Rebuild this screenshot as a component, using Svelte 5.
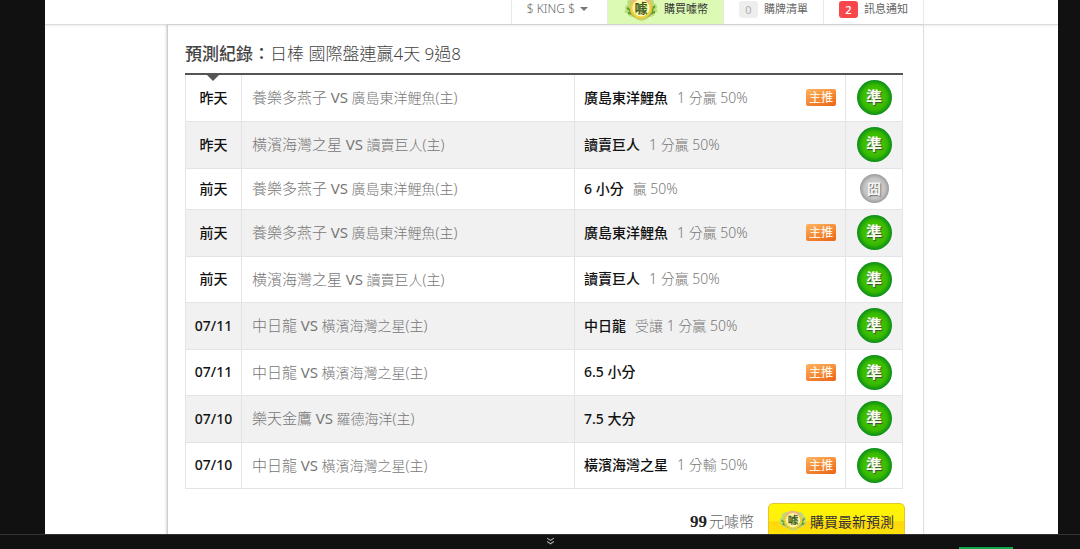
<script>
  let name = "$ KING $";
  let cartCount = 0;
  let noticeCount = 2;
  let price = 99;

  const records = [
    { day: "昨天", away: "養樂多燕子", home: "廣島東洋鯉魚", pick: "廣島東洋鯉魚", note: "1 分贏 50%", main: true, hit: true },
    { day: "昨天", away: "橫濱海灣之星", home: "讀賣巨人", pick: "讀賣巨人", note: "1 分贏 50%", main: false, hit: true },
    { day: "前天", away: "養樂多燕子", home: "廣島東洋鯉魚", pick: "6 小分", note: "贏 50%", main: false, hit: false },
    { day: "前天", away: "養樂多燕子", home: "廣島東洋鯉魚", pick: "廣島東洋鯉魚", note: "1 分贏 50%", main: true, hit: true },
    { day: "前天", away: "橫濱海灣之星", home: "讀賣巨人", pick: "讀賣巨人", note: "1 分贏 50%", main: false, hit: true },
    { day: "07/11", away: "中日龍", home: "橫濱海灣之星", pick: "中日龍", note: "受讓 1 分贏 50%", main: false, hit: true },
    { day: "07/11", away: "中日龍", home: "橫濱海灣之星", pick: "6.5 小分", note: "", main: true, hit: true },
    { day: "07/10", away: "樂天金鷹", home: "羅德海洋", pick: "7.5 大分", note: "", main: false, hit: true },
    { day: "07/10", away: "中日龍", home: "橫濱海灣之星", pick: "橫濱海灣之星", note: "1 分輸 50%", main: true, hit: true },
  ];
</script>

{#snippet coin()}
  <svg class="coin" viewBox="0 0 34 28" aria-hidden="true">
    <path d="M9 3C4 4 2 7 4 9C1 11 0 13 2 15C0 16 0 18 3 18C4 21 7 22 10 22C14 27 21 27 25 22C29 22 31 20 31 18C34 17 34 15 32 14C34 12 33 9 30 8C30 5 28 3 25 3Z" fill="#b9dc7c" />
    <path d="M3 13Q6 14 7 18M4 18Q9 18 11 22M31 11Q28 13 28 17M31 17Q26 18 23 22" fill="none" stroke="#5f9c2c" stroke-width="2" />
    <circle cx="17" cy="13" r="11" fill="#ecd23f" stroke="#d9c34a" />
    <circle cx="17" cy="13" r="8" fill="#f7f3a0" stroke="#fffbd0" />
    <path d="M8 7Q16 -1 26 7" fill="none" stroke="#f0b489" stroke-width="2" />
    <text x="17" y="18" text-anchor="middle" font-size="13" font-weight="700" fill="#3f5d1d">噱</text>
  </svg>
{/snippet}

<div class="shell">
  <header>
    <nav class="column">
      <button class="item user">{name}<span class="caret"></span></button>
      <a class="item buy" href="#buy">{@render coin()}購買噱幣</a>
      <a class="item" href="#cart"><span class="badge">{cartCount}</span>購牌清單</a>
      <a class="item" href="#notice"><span class="badge red">{noticeCount}</span>訊息通知</a>
    </nav>
  </header>

  <main class="column">
    <h1><b>預測紀錄：</b>日棒 國際盤連贏4天 9過8</h1>

    <div class="records">
      <table>
        <tbody>
          {#each records as r}
            <tr class:push={!r.hit}>
              <th scope="row">{r.day}</th>
              <td class="game"><span class="away">{r.away}</span> <span class="vs">VS</span> {r.home}(主)</td>
              <td class="pick">
                <div class="pick-row">
                  <b>{r.pick}</b><span>{r.note}</span>
                  {#if r.main}<em>主推</em>{/if}
                </div>
              </td>
              <td class="result">
                {#if r.hit}
                  <span class="mark">準</span>
                {:else}
                  <span class="mark gray">囧</span>
                {/if}
              </td>
            </tr>
          {/each}
        </tbody>
      </table>
    </div>

    <div class="order">
      <p><strong>{price}</strong>元噱幣</p>
      <button class="order-button">{@render coin()}購買最新預測</button>
    </div>
  </main>
</div>

<footer>
  <button class="expand" aria-label="展開">
    <svg viewBox="0 0 8 8"><path d="M1 1L4 3L7 1M1 4L4 6L7 4" fill="none" stroke="#aaa" /></svg>
  </button>
  <span class="tab"></span>
</footer>

<style>
:global(body) {
  background: #111;
  font-family: "Open Sans", "Noto Sans CJK TC", sans-serif;
}

.shell {
  height: 100vh;
  margin: 0 22px 0 45px;
  background: #fff;
  overflow: hidden;
  display: flex;
  flex-direction: column;
}

.column {
  width: 75%;
  max-width: 757px;
  margin-left: 122px;
  box-sizing: border-box;
}

header {
  height: 24px;
  flex-shrink: 0;
  border-bottom: 1px solid #ddd;
  box-shadow: 0 1px 2px rgba(0, 0, 0, 0.08);
  overflow: hidden;
}

nav {
  display: flex;
  justify-content: flex-end;
}

.item {
  display: flex;
  align-items: center;
  height: 24px;
  padding: 0 15px 6px;
  box-sizing: border-box;
  border: 0;
  border-right: 1px solid #e8e8e8;
  background: none;
  color: #666;
  font-family: inherit;
  font-size: 11px;
  line-height: 16px;
  text-decoration: none;
  white-space: nowrap;
}

.user {
  border-left: 1px solid #e8e8e8;
  padding-right: 19px;
  font-family: "Noto Sans", sans-serif;
  font-size: 12px;
  font-weight: 300;
}

.caret {
  margin-left: 5px;
  border: 4px solid transparent;
  border-top-color: #777;
  border-bottom: 0;
}

.buy {
  padding-left: 16px;
  background: #dcfab4;
  color: #333;
}

.coin {
  width: 34px;
  height: 28px;
  flex-shrink: 0;
  margin-right: 6px;
}

.badge {
  width: 19px;
  line-height: 17px;
  margin-right: 6px;
  border-radius: 3px;
  background: #eee;
  color: #aaa;
  font-size: 11px;
  text-align: center;
}

.badge.red {
  background: #f9484c;
  color: #fff;
  font-weight: 600;
}

main {
  flex: 1;
  padding: 16px 20px 0 17px;
  border-left: 1px solid #ccc;
  border-right: 1px solid #ddd;
  box-shadow: -1px 0 2px rgba(0, 0, 0, 0.15);
}

h1 {
  margin: 0 0 6px;
  color: #444;
  font-family: "Noto Sans", "Noto Sans CJK TC", sans-serif;
  font-size: 17px;
  font-weight: 300;
  line-height: 26px;
}

h1 b {
  font-weight: 500;
}

.records {
  position: relative;
  border-top: 2px solid #555;
}

.records::before {
  content: "";
  position: absolute;
  left: 22px;
  top: 0;
  border: 6px solid transparent;
  border-top-color: #555;
  border-bottom: 0;
}

table {
  width: 100%;
  table-layout: fixed;
  border-collapse: collapse;
  color: #777;
  font-family: "Noto Sans", "Noto Sans CJK TC", sans-serif;
  font-size: 14px;
  line-height: 20px;
}

tr {
  height: 46px;
}

tr:nth-child(even) {
  height: 47px;
  background: #f1f1f1;
}

tr.push {
  height: 41px;
}

th,
td {
  padding: 0;
  border: 1px solid #e4e4e4;
}

tr:first-child > * {
  border-top: 0;
}

th {
  width: 55px;
  color: #111;
  font-weight: 500;
}

.game {
  width: 322px;
  padding-left: 10px;
  font-weight: 300;
}

.away,
.vs {
  font-size: 15px;
}

.vs {
  font-weight: 400;
}

.pick {
  padding: 0 9px;
}

.pick-row {
  display: flex;
  align-items: center;
  font-weight: 300;
}

.pick-row b {
  margin-right: 9px;
  color: #111;
  font-weight: 500;
}

.pick-row em {
  width: 30px;
  margin-left: auto;
  border-radius: 2px;
  background: linear-gradient(160deg, #ffb45e, #ea6415);
  color: #fff3e2;
  font-size: 12px;
  font-style: normal;
  font-weight: 500;
  line-height: 17px;
  text-align: center;
}

.result {
  width: 56px;
}

.mark {
  display: block;
  width: 35px;
  margin: 0 auto;
  border-radius: 50%;
  background: radial-gradient(circle, #4fd400 0%, #38b900 50%, #078a1c 72%);
  color: #f4ffe8;
  font-size: 16px;
  font-weight: 700;
  line-height: 35px;
  text-align: center;
  text-shadow: 1px 1px 1px #444;
}

.mark.gray {
  width: 29px;
  background: radial-gradient(circle, #d5d5d5 0%, #c4c4c4 50%, #999 72%);
  color: #f4f4f4;
  font-size: 14px;
  line-height: 29px;
  text-shadow: 1px 1px 1px #777;
}

.order {
  display: flex;
  justify-content: flex-end;
  align-items: flex-start;
  margin: 14px -2px 0 0;
}

.order p {
  margin: 6px 14px 0 0;
  color: #666;
  font-size: 15px;
  font-weight: 300;
  line-height: 24px;
}

.order strong {
  margin-right: 2px;
  color: #222;
  font-family: "Liberation Serif", serif;
  font-size: 17px;
  font-weight: 700;
}

.order-button {
  display: flex;
  align-items: center;
  height: 36px;
  padding: 0 10px;
  border: 1px solid #e6c52a;
  border-radius: 5px;
  background: linear-gradient(#fff700 0%, #ffee0c 50%, #ffd60e 52%, #ffe600 100%);
  color: #333;
  font-family: inherit;
  font-size: 14px;
  white-space: nowrap;
}

.order-button .coin {
  width: 28px;
  height: 24px;
  margin-right: 3px;
}

footer {
  position: fixed;
  left: 0;
  right: 0;
  bottom: 0;
  height: 14px;
  border-top: 1px solid #333;
  background: #111;
  display: flex;
  justify-content: center;
}

.expand {
  display: flex;
  height: 14px;
  padding: 2px 10px;
  border: 0;
  background: none;
  margin-left: 20px;
}

.expand svg {
  width: 9px;
  height: 9px;
}

.tab {
  position: absolute;
  right: 67px;
  bottom: 0;
  width: 54px;
  height: 2px;
  background: #13a84b;
}
</style>
